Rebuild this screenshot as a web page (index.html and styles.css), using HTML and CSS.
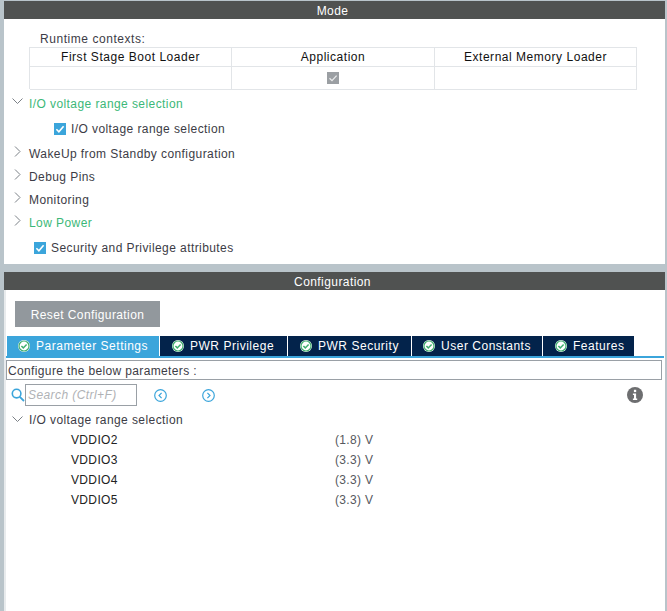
FILE: index.html
```html
<!DOCTYPE html>
<html lang="en">
<head>
<meta charset="utf-8">
<title>Pinout configuration</title>
<link rel="stylesheet" href="styles.css">
</head>
<body>
<div class="app">
  <section class="panel mode">
    <h2 class="bar">Mode</h2>
    <div class="mode-body">
      <div class="ctx-label">Runtime contexts:</div>
      <div class="ctx-table">
        <div class="cell head">First Stage Boot Loader</div>
        <div class="cell head">Application</div>
        <div class="cell head">External Memory Loader</div>
        <div class="cell"></div>
        <div class="cell"><svg class="ctx-check" width="12" height="12" viewBox="0 0 12 12"><rect width="12" height="12" fill="#9b9fa3"/><path d="M2.5 6.2 5 8.6 9.6 3.6" fill="none" stroke="#e9eaeb" stroke-width="1.3"/></svg></div>
        <div class="cell"></div>
      </div>
      <div class="row r-open green"><svg class="chev" width="11" height="11" viewBox="0 0 11 11"><path d="M0.5 2.5 5.5 7.5 10.5 2.5" fill="none" stroke="#7b8086"/></svg>I/O voltage range selection</div>
      <div class="row r-check1"><svg class="box" width="12" height="12" viewBox="0 0 12 12"><rect width="12" height="12" fill="#3ba5db"/><path d="M2.4 6.2 4.9 8.8 9.6 3.2" fill="none" stroke="#fff" stroke-width="1.6"/></svg>I/O voltage range selection</div>
      <div class="row r-closed1"><svg class="chev up" width="11" height="11" viewBox="0 0 11 11"><path d="M3 0.5 8 5.5 3 10.5" fill="none" stroke="#7b8086"/></svg>WakeUp from Standby configuration</div>
      <div class="row r-closed"><svg class="chev up" width="11" height="11" viewBox="0 0 11 11"><path d="M3 0.5 8 5.5 3 10.5" fill="none" stroke="#7b8086"/></svg>Debug Pins</div>
      <div class="row r-closed"><svg class="chev up" width="11" height="11" viewBox="0 0 11 11"><path d="M3 0.5 8 5.5 3 10.5" fill="none" stroke="#7b8086"/></svg>Monitoring</div>
      <div class="row r-closed green"><svg class="chev up" width="11" height="11" viewBox="0 0 11 11"><path d="M3 0.5 8 5.5 3 10.5" fill="none" stroke="#7b8086"/></svg>Low Power</div>
      <div class="row r-check2"><svg class="box" width="12" height="12" viewBox="0 0 12 12"><rect width="12" height="12" fill="#3ba5db"/><path d="M2.4 6.2 4.9 8.8 9.6 3.2" fill="none" stroke="#fff" stroke-width="1.6"/></svg>Security and Privilege attributes</div>
    </div>
  </section>
  <section class="panel config">
    <h2 class="bar">Configuration</h2>
    <div class="config-body">
      <button class="reset" type="button">Reset Configuration</button>
      <div class="tabs">
        <div class="tab active t1"><svg class="ok" width="12" height="12" viewBox="0 0 12 12"><circle cx="6" cy="6" r="6" fill="#fff"/><circle cx="6" cy="6" r="5" fill="none" stroke="#3fae6e" stroke-width="1.2"/><path d="M3.4 6 5.3 7.9 8.6 4.4" fill="none" stroke="#3fae6e" stroke-width="1.5"/></svg>Parameter Settings</div>
        <div class="tab t2"><svg class="ok" width="12" height="12" viewBox="0 0 12 12"><circle cx="6" cy="6" r="6" fill="#fff"/><circle cx="6" cy="6" r="5" fill="none" stroke="#3fae6e" stroke-width="1.2"/><path d="M3.4 6 5.3 7.9 8.6 4.4" fill="none" stroke="#3fae6e" stroke-width="1.5"/></svg>PWR Privilege</div>
        <div class="tab t3"><svg class="ok" width="12" height="12" viewBox="0 0 12 12"><circle cx="6" cy="6" r="6" fill="#fff"/><circle cx="6" cy="6" r="5" fill="none" stroke="#3fae6e" stroke-width="1.2"/><path d="M3.4 6 5.3 7.9 8.6 4.4" fill="none" stroke="#3fae6e" stroke-width="1.5"/></svg>PWR Security</div>
        <div class="tab t4"><svg class="ok" width="12" height="12" viewBox="0 0 12 12"><circle cx="6" cy="6" r="6" fill="#fff"/><circle cx="6" cy="6" r="5" fill="none" stroke="#3fae6e" stroke-width="1.2"/><path d="M3.4 6 5.3 7.9 8.6 4.4" fill="none" stroke="#3fae6e" stroke-width="1.5"/></svg>User Constants</div>
        <div class="tab t5"><svg class="ok" width="12" height="12" viewBox="0 0 12 12"><circle cx="6" cy="6" r="6" fill="#fff"/><circle cx="6" cy="6" r="5" fill="none" stroke="#3fae6e" stroke-width="1.2"/><path d="M3.4 6 5.3 7.9 8.6 4.4" fill="none" stroke="#3fae6e" stroke-width="1.5"/></svg>Features</div>
      </div>
      <div class="configure">Configure the below parameters :</div>
      <div class="search-row">
        <svg class="mag" width="14" height="14" viewBox="0 0 14 14"><circle cx="5.6" cy="5.6" r="4.3" fill="none" stroke="#3ba5db" stroke-width="1.6"/><path d="M8.8 8.8 13 13" stroke="#3ba5db" stroke-width="1.8"/></svg>
        <div class="search">Search (Ctrl+F)</div>
        <svg class="nav prev" width="13" height="13" viewBox="0 0 13 13"><circle cx="6.5" cy="6.5" r="5.8" fill="none" stroke="#3ba5db" stroke-width="1.2"/><path d="M7.6 3.8 5 6.5 7.6 9.2" fill="none" stroke="#3ba5db" stroke-width="1.2"/></svg>
        <svg class="nav next" width="13" height="13" viewBox="0 0 13 13"><circle cx="6.5" cy="6.5" r="5.8" fill="none" stroke="#3ba5db" stroke-width="1.2"/><path d="M5.4 3.8 8 6.5 5.4 9.2" fill="none" stroke="#3ba5db" stroke-width="1.2"/></svg>
        <svg class="info" width="16" height="16" viewBox="0 0 16 16"><circle cx="8" cy="8" r="8" fill="#6d6e70"/><rect x="6.9" y="2.8" width="2.3" height="2.3" fill="#fff"/><path d="M5.9 6.6H9.1V11.6H10.2V13H5.9V11.6H7V8H5.9Z" fill="#fff"/></svg>
      </div>
      <div class="param-group"><svg class="chev" width="11" height="11" viewBox="0 0 11 11"><path d="M0.5 2.5 5.5 7.5 10.5 2.5" fill="none" stroke="#7b8086"/></svg>I/O voltage range selection</div>
      <div class="param"><span class="p-name">VDDIO2</span><span class="p-val">(1.8) V</span></div>
      <div class="param"><span class="p-name">VDDIO3</span><span class="p-val">(3.3) V</span></div>
      <div class="param"><span class="p-name">VDDIO4</span><span class="p-val">(3.3) V</span></div>
      <div class="param"><span class="p-name">VDDIO5</span><span class="p-val">(3.3) V</span></div>
    </div>
  </section>
</div>
</body>
</html>
```
FILE: styles.css
```css
* { box-sizing: border-box; }
html, body { margin: 0; padding: 0; height: 100%; }
body {
  background: #b9c4ca;
  font-family: "Liberation Sans", Arial, sans-serif;
  font-size: 12px;
  letter-spacing: 0.42px;
  color: #3c3c46;
  overflow: hidden;
}
.app {
  height: 611px;
  padding: 1px 2px 0 4px;
  display: flex;
  flex-direction: column;
  gap: 8px;
}
.panel { background: #fff; display: flex; flex-direction: column; }
.mode { height: 263px; }
.config { flex: 1; }
.bar {
  margin: 0;
  height: 18px;
  line-height: 20px;
  padding-right: 4px;
  background: #505251;
  color: #fff;
  font-size: 12px;
  font-weight: normal;
  text-align: center;
}
.mode-body { padding-left: 25px; flex: 1; }
.ctx-label { height: 28px; padding: 13px 0 0 11px; line-height: 14px; letter-spacing: 0.55px; }
.ctx-table {
  width: 608px;
  height: 42px;
  display: grid;
  grid-template-columns: 202px 203px 202px;
  grid-template-rows: 19px 23px;
  border: solid #e2e5e8;
  border-width: 1px 0 0 1px;
}
.cell {
  border: solid #e2e5e8;
  border-width: 0 1px 1px 0;
  display: flex;
  align-items: center;
  justify-content: center;
}
.cell.head { color: #111; letter-spacing: 0.53px; }
.row { display: flex; align-items: center; height: 23px; }
.green { color: #3cb878; }
.chev { flex: none; margin: 0 6px 0 -17px; position: relative; }
.r-open { margin-top: 3px; }
.r-open .chev { margin: -4px 6px 0 -17px; }
.up { margin-top: -5px; }
.r-check1 { margin-top: 2px; padding-left: 25px; color: #3c3c46; }
.r-check1 .box, .r-check2 .box { margin-right: 5px; flex: none; }
.r-closed1 { margin-top: 2px; }
.r-check2 { margin-top: 2px; padding-left: 5px; }
.config-body { flex: 1; padding-top: 11px; border-left: 2px solid #e8ebed; }
.reset {
  display: block;
  margin-left: 9px;
  width: 145px;
  height: 26px;
  padding: 1px 0 0;
  border: 0;
  background: #92989d;
  color: #fff;
  font: inherit;
  letter-spacing: 0.4px;
}
.tabs {
  margin-top: 9px;
  margin-right: 1px;
  height: 22px;
  display: flex;
  gap: 1px;
  padding-left: 1px;
  border-bottom: 2px solid #3ba5db;
}
.tab {
  height: 20px;
  background: #03234b;
  color: #fff;
  display: flex;
  align-items: center;
  letter-spacing: 0.52px;
}
.ok { margin: 0 6px 0 0; flex: none; }
.t1 { width: 152px; background: #3ba5db; padding-left: 11px; }
.t2 { width: 127px; padding-left: 12px; }
.t3 { width: 123px; padding-left: 12px; }
.t4 { width: 130px; padding-left: 11px; }
.t5 { width: 91px; padding-left: 12px; }
.configure {
  margin: 2px 3px 0 0;
  width: 656px;
  height: 20px;
  line-height: 20px;
  border: 1px solid #9aa0a6;
  padding-left: 1px;
  letter-spacing: 0.36px;
}
.search-row {
  height: 22px;
  margin-top: 4px;
  display: flex;
  align-items: center;
  padding-left: 5px;
}
.mag { flex: none; }
.search {
  width: 112px;
  height: 22px;
  border: 1px solid #9aa0a6;
  color: #b0b2b5;
  font-style: italic;
  line-height: 20px;
  padding-left: 2px;
}
.nav { flex: none; }
.prev { margin-left: 17px; }
.next { margin-left: 35px; }
.info { flex: none; margin-left: 412px; }
.param-group {
  display: flex;
  align-items: center;
  height: 20px;
  margin-top: 4px;
  padding-left: 23px;
}
.param-group .chev { margin: -2px 6px 0 -17px; }
.param { display: flex; height: 20px; line-height: 20px; padding-left: 65px; letter-spacing: 0.35px; }
.p-name { width: 264px; color: #222; }
.p-val { color: #55585e; }
```
